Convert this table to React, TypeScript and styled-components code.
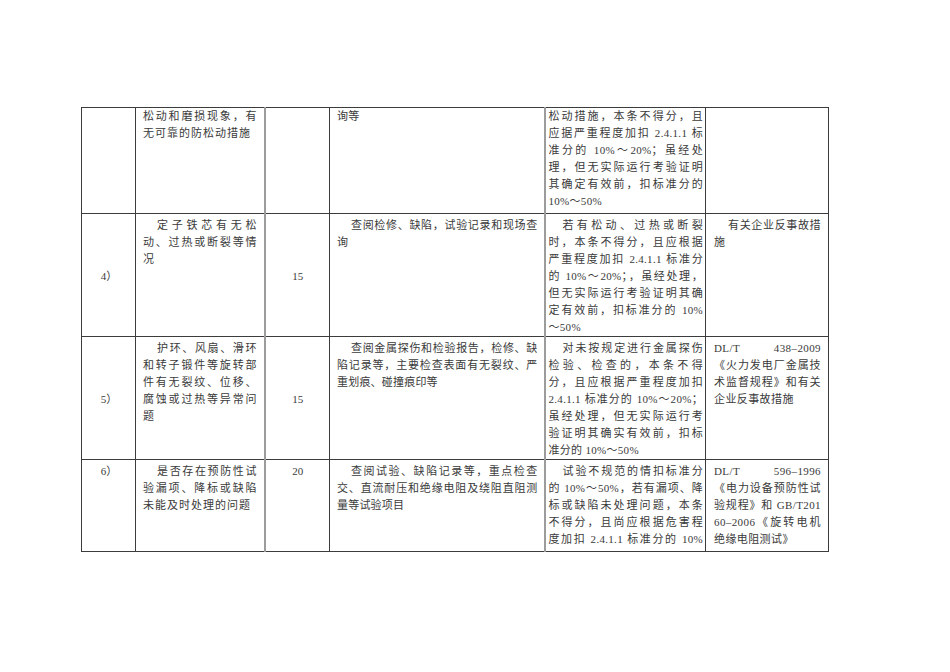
import React from 'react'
import styled, { createGlobalStyle } from 'styled-components'

const GlobalStyle = createGlobalStyle`
  html, body {
    margin: 0;
    padding: 0;
    background: #ffffff;
  }
  body {
    font-family: "Liberation Serif", "Noto Sans CJK SC", serif;
    color: #3a3a3a;
  }
`

type Para = { indent?: boolean; lines: string[]; lastFull?: boolean }
type Cell = {
  para?: Para
  align?: 'left' | 'center'
  valign?: 'top' | 'middle'
}
type Row = { height: number; cells: Cell[] }

// column widths, border to border
const cols = [54, 129, 65, 215, 161, 123]

const rows: Row[] = [
  {
    height: 106,
    cells: [
      {},
      { para: { lines: ['松动和磨损现象，有', '无可靠的防松动措施'] } },
      {},
      { para: { lines: ['询等'] } },
      {
        para: {
          lines: [
            '松动措施，本条不得分，且',
            '应据严重程度加扣 2.4.1.1 标',
            '准分的 10%～20%；虽经处',
            '理，但无实际运行考验证明',
            '其确定有效前，扣标准分的',
            '10%～50%',
          ],
        },
      },
      {},
    ],
  },
  {
    height: 121,
    cells: [
      { para: { lines: ['4）'] }, align: 'center', valign: 'middle' },
      { para: { indent: true, lines: ['定子铁芯有无松', '动、过热或断裂等情', '况'] } },
      { para: { lines: ['15'] }, align: 'center', valign: 'middle' },
      { para: { indent: true, lines: ['查阅检修、缺陷，试验记录和现场查', '询'] } },
      {
        para: {
          indent: true,
          lines: [
            '若有松动、过热或断裂',
            '时，本条不得分，且应根据',
            '严重程度加扣 2.4.1.1 标准分',
            '的 10%～20%；，虽经处理，',
            '但无实际运行考验证明其确',
            '定有效前，扣标准分的 10%',
            '～50%',
          ],
        },
      },
      { para: { indent: true, lines: ['有关企业反事故措', '施'] } },
    ],
  },
  {
    height: 123,
    cells: [
      { para: { lines: ['5）'] }, align: 'center', valign: 'middle' },
      {
        para: {
          indent: true,
          lines: ['护环、风扇、滑环', '和转子锻件等旋转部', '件有无裂纹、位移、', '腐蚀或过热等异常问', '题'],
        },
      },
      { para: { lines: ['15'] }, align: 'center', valign: 'middle' },
      {
        para: {
          indent: true,
          lines: ['查阅金属探伤和检验报告，检修、缺', '陷记录等，主要检查表面有无裂纹、严', '重划痕、碰撞痕印等'],
        },
      },
      {
        para: {
          indent: true,
          lines: [
            '对未按规定进行金属探伤',
            '检验、检查的，本条不得',
            '分，且应根据严重程度加扣',
            '2.4.1.1 标准分的 10%～20%；',
            '虽经处理，但无实际运行考',
            '验证明其确实有效前，扣标',
            '准分的 10%～50%',
          ],
        },
      },
      {
        para: {
          lines: ['DL/T 438–2009', '《火力发电厂金属技', '术监督规程》和有关', '企业反事故措施'],
        },
      },
    ],
  },
  {
    height: 92,
    cells: [
      { para: { lines: ['6）'] }, align: 'center', valign: 'top' },
      { para: { indent: true, lines: ['是否存在预防性试', '验漏项、降标或缺陷', '未能及时处理的问题'] } },
      { para: { lines: ['20'] }, align: 'center', valign: 'top' },
      {
        para: {
          indent: true,
          lines: ['查阅试验、缺陷记录等，重点检查', '交、直流耐压和绝缘电阻及绕阻直阻测', '量等试验项目'],
        },
      },
      {
        para: {
          indent: true,
          lastFull: true,
          lines: [
            '试验不规范的情扣标准分',
            '的 10%～50%，若有漏项、降',
            '标或缺陷未处理问题，本条',
            '不得分，且尚应根据危害程',
            '度加扣 2.4.1.1 标准分的 10%',
          ],
        },
      },
      {
        para: {
          lines: ['DL/T 596–1996', '《电力设备预防性试', '验规程》和 GB/T201', '60–2006《旋转电机', '绝缘电阻测试》'],
        },
      },
    ],
  },
]

// per-column tweaks seen in the scan
const colPad = [4, 7, 4, 7, 3, 8]
const colSpacing = [0, 1, 0, 0.2, 0.3, 0.4]
const softLeft = [false, false, true, false, true, false]

function App() {
  return (
    <Page>
      <GlobalStyle />
      <Sheet>
        <colgroup>
          {cols.map((w, i) => (
            <col key={i} style={{ width: w }} />
          ))}
        </colgroup>
        <tbody>
          {rows.map((row, ri) => (
            <tr key={ri} style={{ height: row.height }}>
              {row.cells.map((cell, ci) => (
                <Td
                  key={ci}
                  $align={cell.align || 'left'}
                  $valign={cell.valign || 'top'}
                  $pad={colPad[ci]}
                  $soft={softLeft[ci]}
                  $ls={colSpacing[ci]}
                  $top={ri === 0 ? 0 : 3}
                >
                  {cell.para &&
                    cell.para.lines.map((line, li) => {
                      const last = li === cell.para!.lines.length - 1
                      const full = cell.align !== 'center' && (!last || !!cell.para!.lastFull)
                      return (
                        <Line key={li} $full={full} $indent={!!cell.para!.indent && li === 0}>
                          {line}
                        </Line>
                      )
                    })}
                </Td>
              ))}
            </tr>
          ))}
        </tbody>
      </Sheet>
    </Page>
  )
}

export default App

const Page = styled.div`
  width: 950px;
  height: 672px;
  box-sizing: border-box;
  padding: 107px 0 0 81px;
  background: #fff;
`

const Sheet = styled.table`
  width: 747px;
  border-collapse: collapse;
  table-layout: fixed;
  font-size: 11px;
  line-height: 17px;
  border-bottom: 1px solid #3c3c3c;
`

const Td = styled.td<{ $align: string; $valign: string; $pad: number; $soft: boolean; $ls: number; $top: number }>`
  border: 1px solid #3c3c3c;
  border-left: ${(p) => (p.$soft ? '2px solid #9c9c9c' : '1px solid #3c3c3c')};
  padding: ${(p) => p.$top}px ${(p) => p.$pad - 1}px 0 ${(p) => p.$pad}px;
  vertical-align: ${(p) => p.$valign};
  text-align: ${(p) => p.$align};
  letter-spacing: ${(p) => p.$ls}px;
  overflow: hidden;
`

const Line = styled.div<{ $full: boolean; $indent: boolean }>`
  white-space: nowrap;
  text-align-last: ${(p) => (p.$full ? 'justify' : 'auto')};
  padding-left: ${(p) => (p.$indent ? '14px' : '0')};
`
